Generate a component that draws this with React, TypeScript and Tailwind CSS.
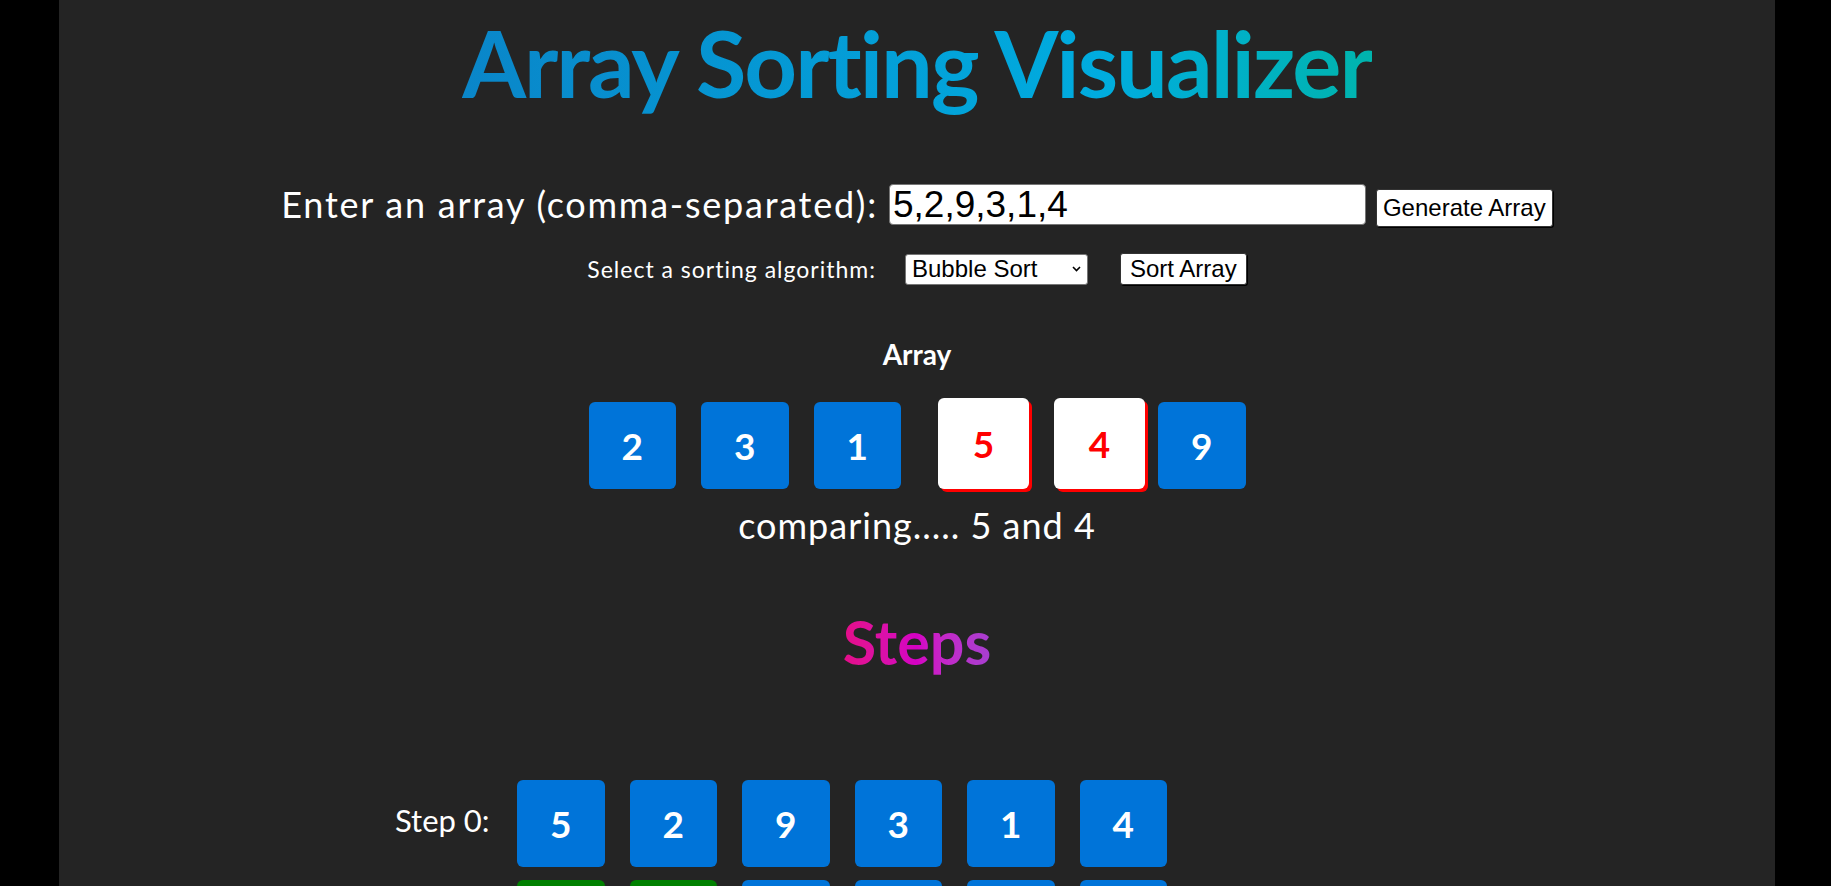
import { useState } from "react";

const BLUE = "bg-[#0074d9]";

// bubble sort steps, green = swapped pair
function bubbleSteps(input: number[]) {
  const arr = [...input];
  const steps: { values: number[]; swapped: number[] }[] = [{ values: [...arr], swapped: [] }];
  for (let i = 0; i < arr.length - 1; i++) {
    for (let j = 0; j < arr.length - 1 - i; j++) {
      if (arr[j] > arr[j + 1]) {
        [arr[j], arr[j + 1]] = [arr[j + 1], arr[j]];
        steps.push({ values: [...arr], swapped: [j, j + 1] });
      }
    }
  }
  return steps;
}

function Box({ value, kind }: { value: number; kind: "plain" | "compare" | "swapped" }) {
  if (kind === "compare") {
    return (
      <div className="w-[91px] h-[91px] rounded-[6px] bg-white text-[#ff0000] shadow-[3px_3px_0_#ff0000] flex items-center justify-center text-[37px] font-bold translate-x-[12px] -translate-y-[2px]">
        {value}
      </div>
    );
  }
  return (
    <div
      className={`w-[87.5px] h-[87px] rounded-[6px] text-white flex items-center justify-center text-[37px] font-bold ${
        kind === "swapped" ? "bg-[#008000]" : BLUE
      }`}
    >
      {value}
    </div>
  );
}

export default function App() {
  const [text, setText] = useState("5,2,9,3,1,4");
  const [algo, setAlgo] = useState("bubble");
  const current = [2, 3, 1, 5, 4, 9];
  const comparing = [3, 4];
  const steps = bubbleSteps([5, 2, 9, 3, 1, 4]).slice(0, 3);

  return (
    <div className="h-[886px] overflow-hidden bg-black">
      <div className="ml-[59px] w-[1716px] h-[886px] bg-[#242424] text-white font-['Lato',sans-serif] flex flex-col items-center">
        <h1 className="h-[126px] leading-[126px] text-[92px] font-bold tracking-[-2px] bg-linear-to-r from-[#0a86c9] via-[#00acdf] via-70% to-[#00b4ad] bg-clip-text text-transparent">
          Array Sorting Visualizer
        </h1>

        <div className="mt-[58px] h-[43px] flex items-start">
          <label className="h-[41px] leading-[41px] text-[36px] tracking-[1.75px] mr-[11px]">
            Enter an array (comma-separated):
          </label>
          <input
            value={text}
            onChange={(e) => setText(e.target.value)}
            className="w-[477px] h-[41px] rounded-[4px] border border-[#767676] bg-white text-black px-[3px] text-[37px] leading-none font-['Liberation_Sans',Arial,sans-serif] outline-none"
          />
          <button className="ml-[10px] mt-[5px] h-[38px] px-[6px] rounded-[3px] border border-[#333] shadow-[1px_1px_0_#000] bg-white text-black text-[24px] leading-none font-['Liberation_Sans',Arial,sans-serif]">
            Generate Array
          </button>
        </div>

        <div className="mt-[26px] h-[32px] flex items-center">
          <span className="text-[23px] tracking-[1px] mr-[29px]">Select a sorting algorithm:</span>
          <div className="relative">
            <select
              value={algo}
              onChange={(e) => setAlgo(e.target.value)}
              className="appearance-none w-[183px] h-[31px] rounded-[3px] border border-[#767676] bg-white text-black pl-[6px] text-[24px] leading-none font-['Liberation_Sans',Arial,sans-serif] outline-none"
            >
              <option value="bubble">Bubble Sort</option>
              <option value="selection">Selection Sort</option>
              <option value="insertion">Insertion Sort</option>
            </select>
            <svg
              className="pointer-events-none absolute right-[7px] top-[12px]"
              width="9"
              height="6"
              viewBox="0 0 9 6"
              fill="none"
              stroke="#000"
              strokeWidth="1.6"
            >
              <path d="M1 1l3.5 3.5L8 1" />
            </svg>
          </div>
          <button className="ml-[32px] h-[32px] px-[9px] rounded-[3px] border border-[#333] shadow-[1px_1px_0_#000] bg-white text-black text-[24px] leading-none font-['Liberation_Sans',Arial,sans-serif]">
            Sort Array
          </button>
        </div>

        <h3 className="mt-[49px] h-[40px] leading-[40px] text-[28px] font-bold">Array</h3>

        <div className="mt-[26px] h-[91px] flex items-center gap-[25px]">
          {current.map((v, i) => (
            <Box key={i} value={v} kind={comparing.includes(i) ? "compare" : "plain"} />
          ))}
        </div>

        <p className="mt-[12px] h-[44px] leading-[44px] text-[36px] tracking-[1px]">
          comparing..... {current[comparing[0]]} and {current[comparing[1]]}
        </p>

        <h2 className="mt-[55px] h-[80px] leading-[80px] text-[61px] font-bold bg-linear-to-r from-[#e40c88] via-[#d400c4] to-[#a73ed0] bg-clip-text text-transparent">
          Steps
        </h2>

        <div className="self-stretch mt-[98px] pl-[336px] flex flex-col gap-[13px]">
          {steps.map((s, i) => (
            <div key={i} className="flex items-center">
              <span className="w-[122px] pb-[7px] text-[31px] leading-none">Step {i}:</span>
              <div className="flex gap-[25px]">
                {s.values.map((v, j) => (
                  <Box key={j} value={v} kind={s.swapped.includes(j) ? "swapped" : "plain"} />
                ))}
              </div>
            </div>
          ))}
        </div>
      </div>
    </div>
  );
}
